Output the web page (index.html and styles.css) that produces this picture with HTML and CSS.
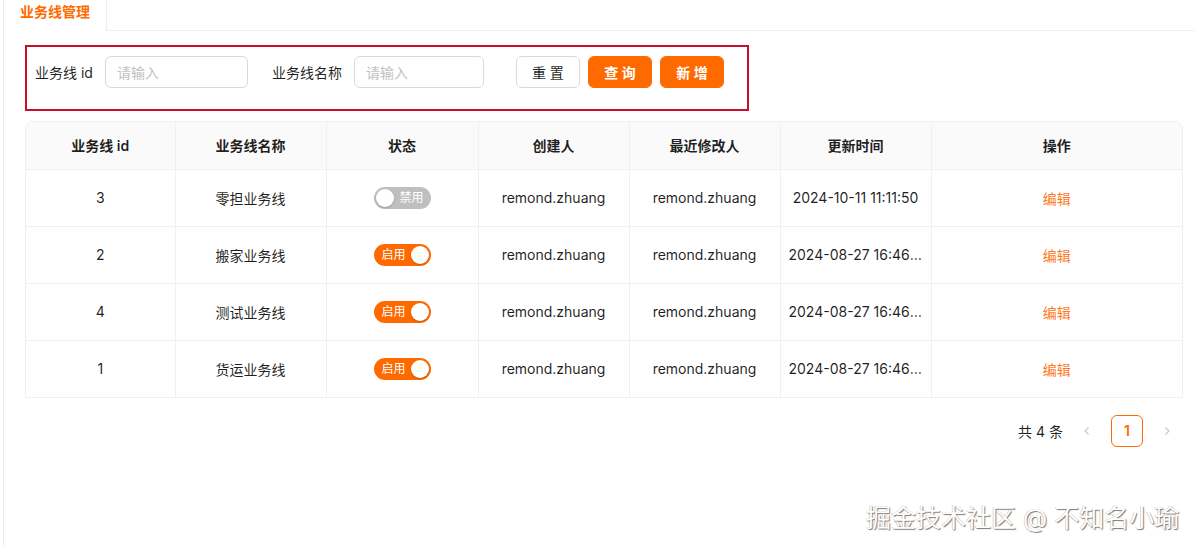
FILE: index.html
```html
<!DOCTYPE html>
<html lang="zh-CN">
<head>
  <meta charset="UTF-8">
  <meta name="viewport" content="width=device-width, initial-scale=1.0">
  <title>业务线管理</title>
  <link rel="stylesheet" href="styles.css">
</head>
<body>

<div class="page">
  <div class="tabs">
    <div class="tab active">业务线管理</div>
    <div class="tab-rest"></div>
  </div>

  <div class="content">
    <div class="search">
      <label class="label">业务线 id</label>
      <input type="text" class="input" placeholder="请输入">
      <label class="label second">业务线名称</label>
      <input type="text" class="input short" placeholder="请输入">
      <div class="btns">
        <button class="btn">重 置</button>
        <button class="btn primary">查 询</button>
        <button class="btn primary">新 增</button>
      </div>
    </div>

    <div class="table-wrap">
      <table class="table">
        <colgroup>
          <col style="width:149px">
          <col style="width:151px">
          <col style="width:152px">
          <col style="width:151px">
          <col style="width:151px">
          <col style="width:151px">
          <col>
        </colgroup>
        <thead>
          <tr>
            <th>业务线 id</th>
            <th>业务线名称</th>
            <th>状态</th>
            <th>创建人</th>
            <th>最近修改人</th>
            <th>更新时间</th>
            <th>操作</th>
          </tr>
        </thead>
        <tbody>
          <tr>
            <td>3</td>
            <td>零担业务线</td>
            <td><span class="switch off"><span class="knob"></span><span class="switch-text">禁用</span></span></td>
            <td>remond.zhuang</td>
            <td>remond.zhuang</td>
            <td class="ellipsis">2024-10-11 11:11:50</td>
            <td><a class="link" href="#">编辑</a></td>
          </tr>
          <tr>
            <td>2</td>
            <td>搬家业务线</td>
            <td><span class="switch on"><span class="switch-text">启用</span><span class="knob"></span></span></td>
            <td>remond.zhuang</td>
            <td>remond.zhuang</td>
            <td class="ellipsis">2024-08-27 16:46:12</td>
            <td><a class="link" href="#">编辑</a></td>
          </tr>
          <tr>
            <td>4</td>
            <td>测试业务线</td>
            <td><span class="switch on"><span class="switch-text">启用</span><span class="knob"></span></span></td>
            <td>remond.zhuang</td>
            <td>remond.zhuang</td>
            <td class="ellipsis">2024-08-27 16:46:12</td>
            <td><a class="link" href="#">编辑</a></td>
          </tr>
          <tr>
            <td>1</td>
            <td>货运业务线</td>
            <td><span class="switch on"><span class="switch-text">启用</span><span class="knob"></span></span></td>
            <td>remond.zhuang</td>
            <td>remond.zhuang</td>
            <td class="ellipsis">2024-08-27 16:46:12</td>
            <td><a class="link" href="#">编辑</a></td>
          </tr>
        </tbody>
      </table>
    </div>

    <div class="pager">
      <span class="total">共 4 条</span>
      <span class="pg-arrow disabled">
        <svg width="12" height="12" viewBox="0 0 12 12"><path d="M7.5 2.5 L4 6 L7.5 9.5" fill="none" stroke="currentColor" stroke-width="1.2"/></svg>
      </span>
      <span class="pg-item current">1</span>
      <span class="pg-arrow disabled">
        <svg width="12" height="12" viewBox="0 0 12 12"><path d="M4.5 2.5 L8 6 L4.5 9.5" fill="none" stroke="currentColor" stroke-width="1.2"/></svg>
      </span>
    </div>
  </div>

  <div class="watermark">掘金技术社区 @ 不知名小瑜</div>
</div>

</body>
</html>
```

FILE: styles.css
```css
* {
  box-sizing: border-box;
}

body {
  margin: 0;
  padding: 0;
  background: #fff;
  font-family: Inter, "Noto Sans CJK SC", sans-serif;
  font-size: 14px;
  color: rgba(0, 0, 0, 0.88);
}

.page {
  position: relative;
  margin-left: 3px;
  height: 546px;
  border-left: 1px solid #ececec;
  overflow: hidden;
}

.tabs {
  display: flex;
  height: 31px;
}

.tab {
  width: 103px;
  padding-left: 16px;
  line-height: 24px;
  font-size: 14px;
  border-right: 1px solid #eeeeee;
}

.tab.active {
  color: #ff6a00;
  font-weight: 600;
}

.tab-rest {
  flex: 1;
  border-bottom: 1px solid #eeeeee;
}

.content {
  padding: 14px 12px 0 21px;
}

.search {
  display: flex;
  align-items: center;
  width: 724px;
  height: 66px;
  border: 2px solid #c8102e;
  padding: 0 0 12px 8px;
}

.label {
  margin-right: 12px;
  white-space: nowrap;
}

.label.second {
  margin-left: 24px;
}

.input {
  width: 143px;
  height: 32px;
  padding: 0 11px;
  border: 1px solid #d9d9d9;
  border-radius: 6px;
  font-family: inherit;
  font-size: 14px;
  outline: none;
}

.input.short {
  width: 130px;
}

.input::placeholder {
  color: #bfbfbf;
}

.btns {
  display: flex;
  gap: 8px;
  margin-left: 32px;
}

.btn {
  width: 64px;
  height: 32px;
  border: 1px solid #d9d9d9;
  border-radius: 6px;
  background: #fff;
  font-family: inherit;
  font-size: 14px;
  color: rgba(0, 0, 0, 0.88);
  cursor: pointer;
}

.btn.primary {
  background: #ff6a00;
  border-color: #ff6a00;
  color: #fff;
  font-weight: 600;
}

.table-wrap {
  margin-top: 10px;
  border: 1px solid #f0f0f0;
  border-radius: 8px 8px 0 0;
  overflow: hidden;
}

.table {
  width: 100%;
  border-collapse: collapse;
  table-layout: fixed;
}

.table th,
.table td {
  text-align: center;
  padding: 0 8px;
  border-right: 1px solid #f0f0f0;
  border-bottom: 1px solid #f0f0f0;
}

.table th:last-child,
.table td:last-child {
  border-right: none;
}

.table tbody tr:last-child td {
  border-bottom: none;
}

.table th {
  height: 47px;
  background: #fafafa;
  font-weight: 600;
}

.table td {
  height: 57px;
}

.ellipsis {
  white-space: nowrap;
  overflow: hidden;
  text-overflow: ellipsis;
}

.switch {
  display: inline-flex;
  align-items: center;
  width: 57px;
  height: 22px;
  border-radius: 11px;
  padding: 2px;
  vertical-align: middle;
}

.switch.off {
  background: #bfbfbf;
}

.switch.on {
  background: #ff6a00;
  justify-content: space-between;
}

.knob {
  width: 18px;
  height: 18px;
  border-radius: 50%;
  background: #fff;
  box-shadow: 0 1px 2px rgba(0, 0, 0, 0.2);
}

.switch-text {
  margin-left: 6px;
  font-size: 12px;
  color: #fff;
  line-height: 18px;
}

.link {
  color: #ff7a1f;
  text-decoration: none;
}

.pager {
  display: flex;
  justify-content: flex-end;
  align-items: center;
  margin-top: 17px;
}

.total {
  margin-right: 8px;
}

.pg-arrow {
  display: flex;
  align-items: center;
  justify-content: center;
  width: 32px;
  height: 32px;
  margin-right: 8px;
  color: #c8c8c8;
}

.pg-arrow:last-child {
  margin-right: 0;
}

.pg-item {
  width: 32px;
  height: 32px;
  margin-right: 8px;
  line-height: 30px;
  text-align: center;
  border-radius: 6px;
}

.pg-item.current {
  border: 1px solid #ff6a00;
  color: #ff6a00;
  font-weight: 600;
}

.watermark {
  position: absolute;
  left: 862px;
  top: 498px;
  font-size: 25px;
  color: #fff;
  white-space: nowrap;
  text-shadow: 1px 1px 1px #7a7a7a, -0.5px -0.5px 0 #bbb;
}
```
